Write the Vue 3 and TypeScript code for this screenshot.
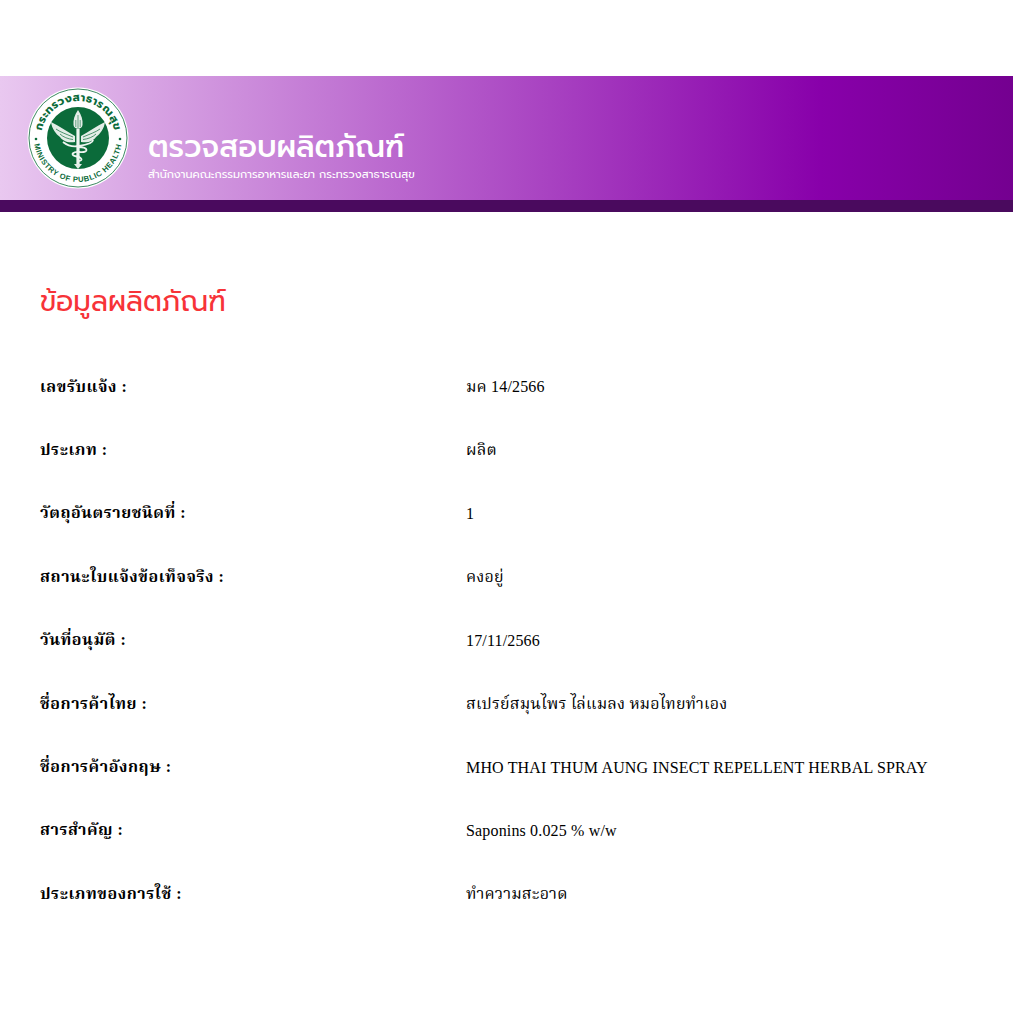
<template>
  <div class="page">
    <header class="banner">
      <div class="brand">
        <svg class="logo" viewBox="0 0 102 102" width="102" height="102">
          <circle cx="51" cy="51" r="50.5" fill="#fff" />
          <circle cx="51" cy="51" r="49" fill="none" stroke="#0b6b3a" stroke-width="0.8" />
          <circle cx="51" cy="51" r="31" fill="#0b6b3a" />
          <defs>
            <path id="arc-top" d="M 14 51 A 37 37 0 0 1 88 51" />
            <path id="arc-bottom" d="M 7 51 A 44 44 0 0 0 95 51" />
          </defs>
          <text class="logo-text logo-thai" font-size="11" font-weight="700" letter-spacing="0.4">
            <textPath href="#arc-top" startOffset="50%" text-anchor="middle">กระทรวงสาธารณสุข</textPath>
          </text>
          <text class="logo-text" font-size="7.6" font-weight="700" letter-spacing="0.55">
            <textPath href="#arc-bottom" startOffset="50%" text-anchor="middle">MINISTRY OF PUBLIC HEALTH</textPath>
          </text>
          <circle cx="9" cy="52" r="1.3" fill="#0b6b3a" />
          <circle cx="93" cy="52" r="1.3" fill="#0b6b3a" />
          <!-- wings -->
          <path d="M48 49 C41 45 32 39 24 35 C25 42 29 47 33 50 C36 54 40 56 48 55Z" fill="#e3ede7" />
          <path d="M54 49 C61 45 70 39 78 35 C77 42 73 47 69 50 C66 54 62 56 54 55Z" fill="#e3ede7" />
          <path d="M46 50 C39 47 33 45 29 42 M46 52.5 C41 52 36 50 33 47 M56 50 C63 47 69 45 73 42 M56 52.5 C61 52 66 50 69 47" fill="none" stroke="#0b6b3a" stroke-width="0.7" />
          <!-- torch flame -->
          <path d="M51 23 C47.5 28 46 33 46.5 38 C47 43 55 43 55.5 38 C56 33 54.5 28 51 23Z" fill="#e3ede7" />
          <path d="M51 28 V41 M48.8 33 V40 M53.2 33 V40" stroke="#0b6b3a" stroke-width="0.6" fill="none" />
          <!-- staff and base -->
          <rect x="49.4" y="42" width="3.2" height="35" fill="#eef4f0" />
          <path d="M47 77 H55 L51 82Z" fill="#e3ede7" />
          <!-- snake -->
          <path d="M36 55 C41 59 47 60 52 59 C58 58 66 56 66 53 M51 60 C62 60 62 66 53 65 C46 64 43 68 48 69 C54 70 57 73 52 74" fill="none" stroke="#eef4f0" stroke-width="1.8" />
        </svg>
        <div class="brand-text">
          <div class="brand-title">ตรวจสอบผลิตภัณฑ์</div>
          <div class="brand-sub">สำนักงานคณะกรรมการอาหารและยา กระทรวงสาธารณสุข</div>
        </div>
      </div>
    </header>
    <div class="strip"></div>

    <main class="content">
      <h1 class="heading">ข้อมูลผลิตภัณฑ์</h1>
      <div class="info">
        <div v-for="row in rows" :key="row.label" class="info-row">
          <div class="label">{{ row.label }} :</div>
          <div class="value">{{ row.value }}</div>
        </div>
      </div>
    </main>
  </div>
</template>

<script setup lang="ts">
interface InfoRow {
  label: string
  value: string
}

const rows: InfoRow[] = [
  { label: 'เลขรับแจ้ง', value: 'มค 14/2566' },
  { label: 'ประเภท', value: 'ผลิต' },
  { label: 'วัตถุอันตรายชนิดที่', value: '1' },
  { label: 'สถานะใบแจ้งข้อเท็จจริง', value: 'คงอยู่' },
  { label: 'วันที่อนุมัติ', value: '17/11/2566' },
  { label: 'ชื่อการค้าไทย', value: 'สเปรย์สมุนไพร ไล่แมลง หมอไทยทำเอง' },
  { label: 'ชื่อการค้าอังกฤษ', value: 'MHO THAI THUM AUNG INSECT REPELLENT HERBAL SPRAY' },
  { label: 'สารสำคัญ', value: 'Saponins 0.025 % w/w' },
  { label: 'ประเภทของการใช้', value: 'ทำความสะอาด' }
]
</script>

<style>
html,
body {
  background: #fff;
}
</style>

<style scoped>
.page {
  padding-top: 76px;
  min-height: 1013px;
  box-sizing: border-box;
  font-family: "Liberation Serif", "Noto Serif Thai", serif;
  font-size: 16px;
  color: #000;
}

.banner {
  height: 124px;
  display: flex;
  align-items: center;
  background: linear-gradient(to right, #e9c8f0 0%, #8800aa 81%, #740090 100%);
}

.brand {
  display: flex;
  align-items: center;
  gap: 19px;
  padding-left: 27px;
}

.logo {
  display: block;
  flex: none;
}

.logo-text {
  fill: #0b6b3a;
  font-family: "Liberation Sans", "Prompt", sans-serif;
}

.logo-thai {
  font-family: "Prompt", sans-serif;
}

.brand-text {
  color: #fff;
  font-family: "Prompt", "Liberation Sans", sans-serif;
  padding-top: 33px;
}

.brand-title {
  font-size: 30px;
  line-height: 40px;
  font-weight: 500;
}

.brand-sub {
  font-size: 11.2px;
  line-height: 16px;
}

.strip {
  height: 12px;
  background: #4a0a5e;
}

.content {
  padding: 68px 40px 0;
}

.heading {
  margin: 0 0 32px;
  font-family: "Prompt", "Liberation Sans", sans-serif;
  font-size: 28px;
  line-height: 44px;
  font-weight: 400;
  color: #f73338;
}

.info-row {
  display: grid;
  grid-template-columns: 426px 1fr;
  align-items: center;
  height: 63.38px;
}

.label {
  font-weight: 700;
  letter-spacing: 0.55px;
}

.value {
  letter-spacing: 0.16px;
}
</style>
